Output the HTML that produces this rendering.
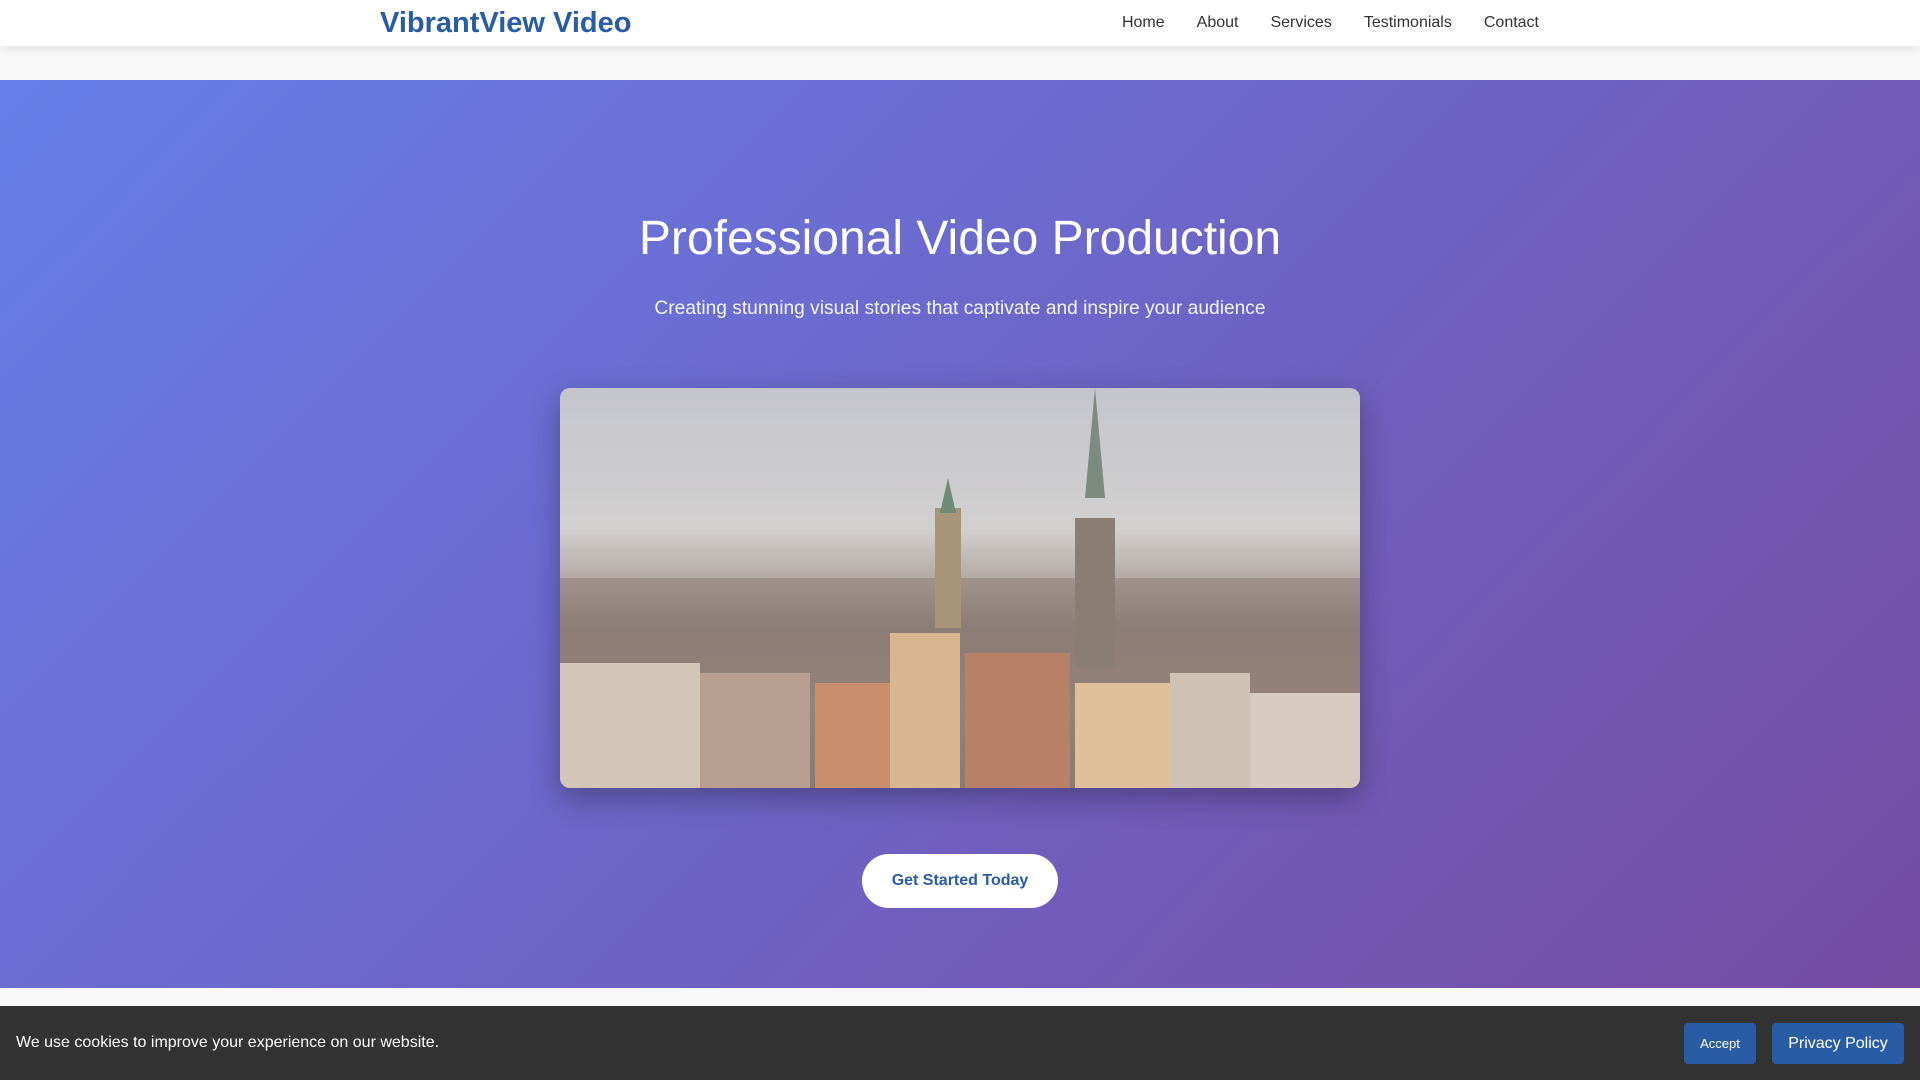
<!DOCTYPE html>
<html><head><meta charset="utf-8"><style>
*{margin:0;padding:0;box-sizing:border-box}
body{width:1920px;height:1080px;overflow:hidden;font-family:"Liberation Sans",sans-serif;background:#f8f8f8;position:relative}
header{position:absolute;top:0;left:0;width:1920px;height:46px;background:#fff;box-shadow:0 2px 10px rgba(0,0,0,.1);z-index:2}
.logo{position:absolute;left:380px;top:7px;font-size:29px;font-weight:bold;color:#2a5ba5}
nav{position:absolute;right:381px;top:14px;font-size:16px;color:#333}
nav span{margin-left:32px}
.hero{position:absolute;top:80px;left:0;width:1920px;height:908px;background:linear-gradient(135deg,#667eea 0%,#764ba2 100%);text-align:center;color:#fff}
h1{position:absolute;top:131px;width:100%;font-size:48px;font-weight:normal}
.sub{position:absolute;top:218px;width:100%;font-size:19.2px;opacity:.92}
.img{position:absolute;left:560px;top:308px;width:800px;height:400px;border-radius:10px;overflow:hidden;box-shadow:0 10px 30px rgba(0,0,0,.3);background:linear-gradient(180deg,#c4c5cc 0%,#d2d0cf 35%,#b4a9a3 48%,#8e8078 60%,#a08a7e 80%,#8c7a6e 100%)}
.btn{position:absolute;left:862px;top:774px;width:196px;height:54px;border-radius:27px;background:#fff;color:#2a5ba5;font-weight:bold;font-size:16px;line-height:54px}
.cookie{position:absolute;top:1006px;left:0;width:1920px;height:74px;background:#333;color:#fff}
.cookie p{position:absolute;left:16px;top:28px;font-size:16px}
.acc{position:absolute;left:1684px;top:17px;width:72px;height:41px;background:#2a5ba5;border-radius:4px;font-size:13px;line-height:41px;text-align:center}
.pp{position:absolute;left:1772px;top:17px;width:132px;height:41px;background:#2a5ba5;border-radius:4px;font-size:16px;line-height:41px;text-align:center}
</style></head><body>
<header><div class="logo">VibrantView Video</div><nav><span>Home</span><span>About</span><span>Services</span><span>Testimonials</span><span>Contact</span></nav></header>
<div class="hero">
<h1>Professional Video Production</h1>
<div class="sub">Creating stunning visual stories that captivate and inspire your audience</div>
<div class="img">
<svg width="800" height="400" viewBox="0 0 800 400">
<rect x="0" y="190" width="800" height="210" fill="#8a7a74" opacity=".5"/>
<rect x="0" y="275" width="140" height="125" fill="#d3c6b8"/>
<rect x="140" y="285" width="110" height="115" fill="#b89e90"/>
<rect x="255" y="295" width="75" height="105" fill="#c98e6c"/>
<rect x="330" y="245" width="70" height="155" fill="#d8b690"/>
<rect x="405" y="265" width="105" height="135" fill="#b98068"/>
<rect x="515" y="295" width="95" height="105" fill="#dfc09a"/>
<rect x="610" y="285" width="80" height="115" fill="#cfc2b4"/>
<rect x="690" y="305" width="110" height="95" fill="#d7cabe"/>
<rect x="515" y="130" width="40" height="150" fill="#8a7e74"/>
<polygon points="535,0 525,110 545,110" fill="#7c8a80"/>
<rect x="375" y="120" width="26" height="120" fill="#a89478"/>
<polygon points="388,90 380,125 396,125" fill="#6f8a78"/>
</svg></div>
<div class="btn">Get Started Today</div>
</div>
<div class="cookie"><p>We use cookies to improve your experience on our website.</p><div class="acc">Accept</div><div class="pp">Privacy Policy</div></div>
</body></html>
